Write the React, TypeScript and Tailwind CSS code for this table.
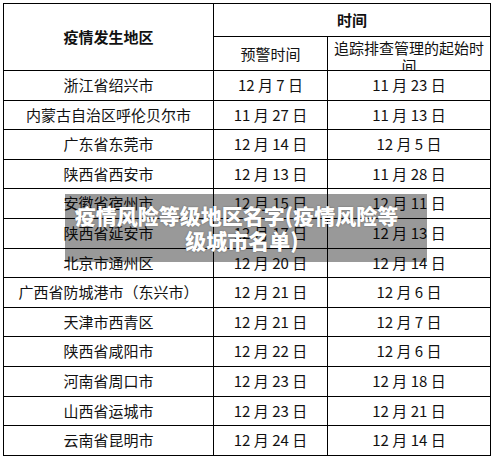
import React from "react";

const rows: [string, string, string][] = [
  ["浙江省绍兴市", "12 月 7 日", "11 月 23 日"],
  ["内蒙古自治区呼伦贝尔市", "11 月 27 日", "11 月 13 日"],
  ["广东省东莞市", "12 月 14 日", "12 月 5 日"],
  ["陕西省西安市", "12 月 13 日", "11 月 28 日"],
  ["安徽省宿州市", "12 月 15 日", "12 月 11 日"],
  ["陕西省延安市", "12 月 17 日", "12 月 13 日"],
  ["北京市通州区", "12 月 20 日", "12 月 14 日"],
  ["广西省防城港市（东兴市）", "12 月 21 日", "12 月 6 日"],
  ["天津市西青区", "12 月 21 日", "12 月 7 日"],
  ["陕西省咸阳市", "12 月 22 日", "12 月 6 日"],
  ["河南省周口市", "12 月 23 日", "12 月 18 日"],
  ["山西省运城市", "12 月 23 日", "12 月 21 日"],
  ["云南省昆明市", "12 月 24 日", "12 月 14 日"],
];

export default function App() {
  return (
    <div
      className="relative w-[494px] h-[457px] bg-white pt-[3px] pl-[3px] text-[#111]"
      style={{ fontFamily: '"Noto Sans CJK SC", "Noto Sans", sans-serif' }}
    >
      <div className="w-[488px] border-l border-t border-black">
        {/* header */}
        <div className="flex h-[67px]">
          <div className="w-[210px] border-r border-b border-black flex items-center justify-center text-[15px] font-bold">
            疫情发生地区
          </div>
          <div className="flex flex-col w-[277px]">
            <div className="h-[33px] border-r border-b border-black flex items-center justify-center text-[15px] font-bold">
              时间
            </div>
            <div className="flex h-[34px]">
              <div className="w-[114px] border-r border-b border-black flex items-center justify-center text-[15px] pt-[2px]">
                预警时间
              </div>
              <div className="w-[163px] border-r border-b border-black overflow-hidden text-center text-[15px] leading-[18px] pt-[2px] px-[4px]">
                追踪排查管理的起始时间
              </div>
            </div>
          </div>
        </div>
        {rows.map((r, i) => (
          <div key={i} className="flex h-[29.6px] text-[15px]">
            <div className="w-[210px] border-r border-b border-black flex items-center justify-center">
              {r[0]}
            </div>
            <div className="w-[114px] border-r border-b border-black flex items-center justify-center whitespace-pre">
              {r[1]}
            </div>
            <div className="w-[163px] border-r border-b border-black flex items-center justify-center whitespace-pre">
              {r[2]}
            </div>
          </div>
        ))}
      </div>
      <div className="absolute left-[65px] top-[194px] w-[362px] h-[68px] bg-black/40 flex flex-col items-center justify-center text-white font-black text-[21px] leading-[25px] [text-shadow:0_0_2px_rgba(0,0,0,0.35)]">
        <div className="pr-[19px]">疫情风险等级地区名字(疫情风险等</div>
        <div className="pr-[8px]">级城市名单)</div>
      </div>
    </div>
  );
}
